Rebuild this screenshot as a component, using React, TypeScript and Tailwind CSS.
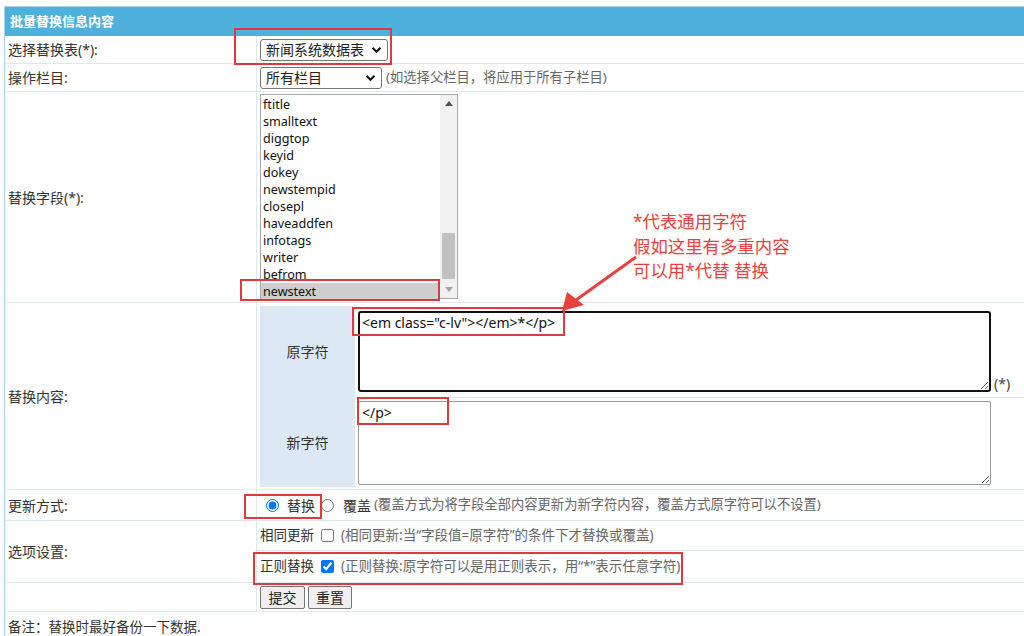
import React from "react";

const fields = [
  "ftitle",
  "smalltext",
  "diggtop",
  "keyid",
  "dokey",
  "newstempid",
  "closepl",
  "haveaddfen",
  "infotags",
  "writer",
  "befrom",
  "newstext",
];

const Chevron = () => (
  <svg width="11" height="8" viewBox="0 0 11 8" className="shrink-0">
    <path d="M1.5 1.8 L5.5 5.8 L9.5 1.8" fill="none" stroke="#111" strokeWidth="2" />
  </svg>
);

const FakeSelect = ({ label, width }: { label: string; width: string }) => (
  <div
    className={`${width} h-[22px] flex items-center justify-between pl-[5px] pr-[5px] border border-[#767676] rounded-[3px] bg-white text-[#222]`}
  >
    <span>{label}</span>
    <Chevron />
  </div>
);

const RedBox = ({ className }: { className: string }) => (
  <div className={`absolute border-2 border-[#e0393e] pointer-events-none ${className}`} />
);

const Row = ({
  label,
  className,
  children,
}: {
  label: string;
  className: string;
  children: React.ReactNode;
}) => (
  <div className={`flex border-b border-[#dde9f1] ${className}`}>
    <div className="w-[252px] shrink-0 flex items-center pl-[3px] border-r border-[#dde9f1]">
      {label}
    </div>
    <div className="flex-1 min-w-0">{children}</div>
  </div>
);

export default function App() {
  return (
    <div className="relative w-[1024px] h-[636px] overflow-hidden bg-white text-[14px] text-[#333] font-['Noto_Sans','Noto_Sans_CJK_SC',sans-serif]">
      <div className="pt-[6px] pl-[4px]">
        <div className="border-l border-t border-[#a9d4ea]">
          {/* header */}
          <div className="h-[29px] flex items-center pl-[5px] bg-[#4eb1dc] text-white font-bold text-[13px]">
            批量替换信息内容
          </div>

          <Row label="选择替换表(*):" className="h-[28px]">
            <div className="h-full flex items-center pl-[3px]">
              <FakeSelect label="新闻系统数据表" width="w-[128px]" />
            </div>
          </Row>

          <Row label="操作栏目:" className="h-[28px]">
            <div className="h-full flex items-center pl-[3px] gap-[4px]">
              <FakeSelect label="所有栏目" width="w-[122px]" />
              <span className="text-[#666] text-[13.3px]">(如选择父栏目，将应用于所有子栏目)</span>
            </div>
          </Row>

          <Row label="替换字段(*):" className="h-[211px]">
            <div className="pl-[3px] pt-[2px]">
              <div className="w-[198px] h-[205px] flex border border-[#a9a9a9] bg-white">
                <div className="flex-1 flex flex-col pt-[1px] text-[12.6px] text-[#111]">
                  {fields.map((f) => (
                    <div
                      key={f}
                      className={`h-[17px] leading-[17px] pl-[2px] ${f === "newstext" ? "bg-[#cecece]" : ""}`}
                    >
                      {f}
                    </div>
                  ))}
                </div>
                <div className="w-[17px] flex flex-col bg-[#f1f1f1]">
                  <div className="h-[17px] flex items-center justify-center">
                    <svg width="8" height="5" viewBox="0 0 8 5">
                      <path d="M0 5 L4 0 L8 5 Z" fill="#505050" />
                    </svg>
                  </div>
                  <div className="flex-1 flex flex-col justify-end pb-[2px]">
                    <div className="mx-[2px] h-[46px] bg-[#c1c1c1]" />
                  </div>
                  <div className="h-[17px] flex items-center justify-center">
                    <svg width="8" height="5" viewBox="0 0 8 5">
                      <path d="M0 0 L4 5 L8 0 Z" fill="#a3a3a3" />
                    </svg>
                  </div>
                </div>
              </div>
            </div>
          </Row>

          <Row label="替换内容:" className="h-[187px]">
            <div className="h-full pl-[3px] pt-[3px] pb-[2px] flex flex-col">
              <div className="flex h-[92px] border-b border-[#dde9f1]">
                <div className="w-[95px] shrink-0 bg-[#dce9f5] flex items-center justify-center">
                  原字符
                </div>
                <div className="flex-1 flex items-end pl-[3px] pt-[5px] pb-[5px]">
                  <textarea
                    readOnly
                    defaultValue={'<em class="c-lv"></em>*</p>'}
                    className="w-[633px] h-[81px] border-2 border-[#111] rounded-[3px] px-[2px] py-[1px] text-[14px] leading-[18px] text-[#111] outline-none resize bg-white"
                  />
                  <span className="pl-[3px] leading-[16px] text-[#444]">(*)</span>
                </div>
              </div>
              <div className="flex flex-1">
                <div className="w-[95px] shrink-0 bg-[#dce9f5] flex items-center justify-center">
                  新字符
                </div>
                <div className="flex-1 flex items-start pl-[3px] pt-[3px]">
                  <textarea
                    readOnly
                    defaultValue="</p>"
                    className="w-[633px] h-[84px] border border-[#999] rounded-[2px] px-[3px] py-[2px] text-[14px] leading-[18px] text-[#111] outline-none resize bg-white"
                  />
                </div>
              </div>
            </div>
          </Row>

          <Row label="更新方式:" className="h-[31px]">
            <div className="h-full flex items-center pl-[9px]">
              <input type="radio" name="m" defaultChecked className="w-[13px] h-[13px] m-0" />
              <span className="ml-[8px]">替换</span>
              <input type="radio" name="m" className="w-[13px] h-[13px] m-0 ml-[6px]" />
              <span className="ml-[9px]">覆盖</span>
              <span className="ml-[3px] text-[#666] text-[13.3px]">
                (覆盖方式为将字段全部内容更新为新字符内容，覆盖方式原字符可以不设置)
              </span>
            </div>
          </Row>

          <Row label="选项设置:" className="h-[62px]">
            <div className="h-[30px] flex items-center pl-[3px] border-b border-[#dde9f1]">
              <span className="text-[13.5px]">相同更新</span>
              <input type="checkbox" className="w-[13px] h-[13px] m-0 ml-[7px]" />
              <span className="ml-[7px] text-[#666] text-[13.5px]">
                (相同更新:当“字段值=原字符”的条件下才替换或覆盖)
              </span>
            </div>
            <div className="h-[31px] flex items-center pl-[3px]">
              <span className="text-[13.5px]">正则替换</span>
              <input type="checkbox" defaultChecked className="w-[13px] h-[13px] m-0 ml-[7px]" />
              <span className="ml-[7px] text-[#666] text-[13.5px]">
                (正则替换:原字符可以是用正则表示，用“*”表示任意字符)
              </span>
            </div>
          </Row>

          <Row label="" className="h-[29px]">
            <div className="h-full flex items-center pl-[3px] gap-[3px]">
              <button className="h-[23px] w-[45px] border border-[#767676] rounded-[2px] bg-[#efefef] text-[#222] text-[14px]">
                提交
              </button>
              <button className="h-[23px] w-[44px] border border-[#767676] rounded-[2px] bg-[#efefef] text-[#222] text-[14px]">
                重置
              </button>
            </div>
          </Row>

          <div className="h-[30px] flex items-center pl-[3px] text-[#333] text-[13.5px]">
            备注：替换时最好备份一下数据.
          </div>
        </div>
      </div>

      {/* annotations */}
      <RedBox className="left-[234px] top-[28px] w-[158px] h-[37px]" />
      <RedBox className="left-[240px] top-[279px] w-[200px] h-[22px]" />
      <RedBox className="left-[352px] top-[307px] w-[213px] h-[29px]" />
      <RedBox className="left-[357px] top-[397px] w-[92px] h-[28px]" />
      <RedBox className="left-[244px] top-[494px] w-[78px] h-[25px]" />
      <RedBox className="left-[253px] top-[552px] w-[430px] h-[33px]" />

      <div className="absolute left-[633px] top-[209px] text-[17.4px] leading-[24.5px] text-[#e8413d]">
        <div>*代表通用字符</div>
        <div>假如这里有多重内容</div>
        <div>可以用*代替 替换</div>
      </div>

      <svg className="absolute left-0 top-0 pointer-events-none" width="1024" height="636">
        <line x1="636" y1="257" x2="576" y2="300" stroke="#e8413d" strokeWidth="3" />
        <polygon points="562,311 567,292 584,305" fill="#e8413d" />
      </svg>
    </div>
  );
}
